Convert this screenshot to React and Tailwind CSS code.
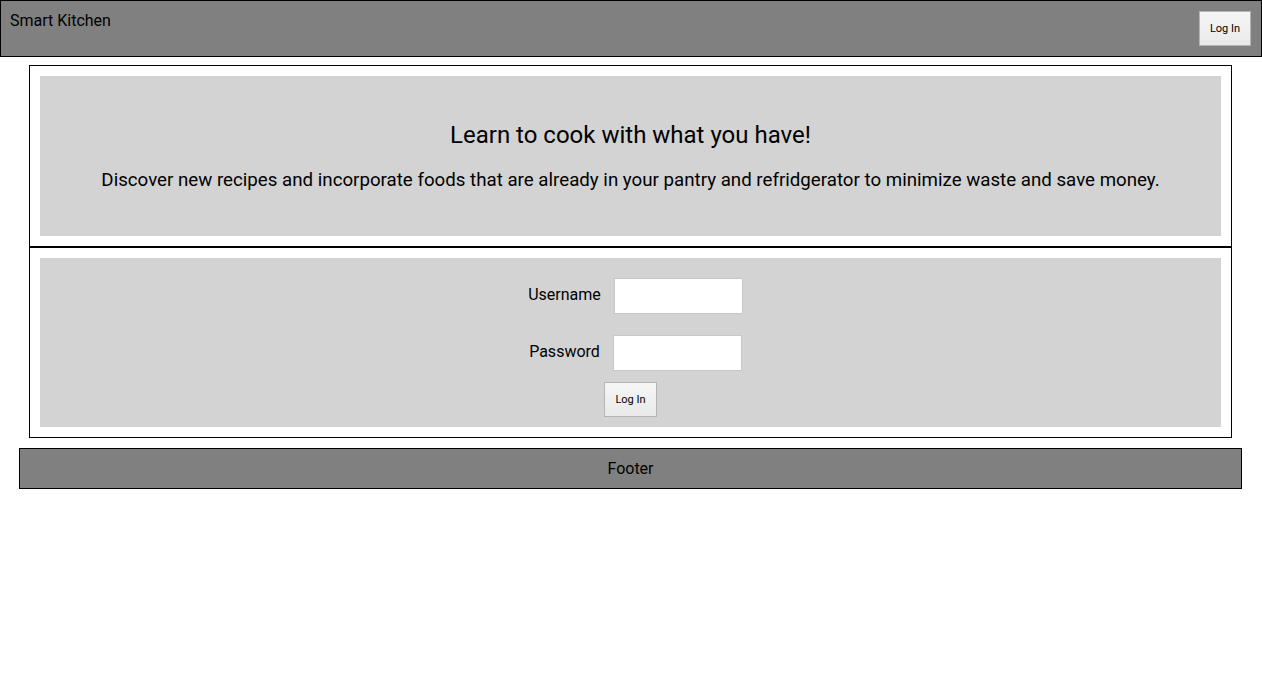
export default function App() {
  const font = { fontFamily: 'Roboto, "Liberation Sans", sans-serif' };
  return (
    <div className="min-h-[675px] bg-white text-black" style={font}>
      <header className="flex h-[57px] items-start justify-between border border-black bg-[#808080] pl-[9px] pr-[10px]">
        <div className="mt-[10px] text-[16px] leading-[20px]">Smart Kitchen</div>
        <button className="mt-[10px] h-[35px] w-[52px] border border-[#b5b5b5] bg-gradient-to-b from-[#f6f6f6] to-[#e9e9e9] text-[11px] leading-none">
          Log In
        </button>
      </header>
      <main className="ml-[29px] mr-[30px] mt-[8px]">
        <section className="border border-black p-[10px]">
          <div className="flex h-[160px] flex-col items-center bg-[#d3d3d3] pt-[45px] text-center">
            <h1 className="text-[24px] leading-[28px]">Learn to cook with what you have!</h1>
            <p className="mt-[20px] text-[18.72px] leading-[22px]">
              Discover new recipes and incorporate foods that are already in your pantry and refridgerator to minimize waste and save money.
            </p>
          </div>
        </section>
        <section className="border border-black p-[10px]">
          <div className="flex h-[169px] flex-col items-center bg-[#d3d3d3] pt-[20px]">
            <div className="flex items-center pl-[10px]">
              <label className="mb-[2px] mr-[13px] text-[16px] leading-[20px]">Username</label>
              <input className="h-[36px] w-[129px] border border-[#c8c8c8] bg-white outline-none" />
            </div>
            <div className="mt-[21px] flex items-center pl-[10px]">
              <label className="mb-[2px] mr-[13px] text-[16px] leading-[20px]">Password</label>
              <input type="password" className="h-[36px] w-[129px] border border-[#c8c8c8] bg-white outline-none" />
            </div>
            <button className="mt-[11px] h-[35px] w-[53px] border border-[#b5b5b5] bg-gradient-to-b from-[#f6f6f6] to-[#e9e9e9] text-[11px] leading-none">
              Log In
            </button>
          </div>
        </section>
      </main>
      <footer className="ml-[19px] mr-[20px] mt-[10px] flex h-[41px] items-center justify-center border border-black bg-[#808080] text-[16px]">
        Footer
      </footer>
    </div>
  );
}
